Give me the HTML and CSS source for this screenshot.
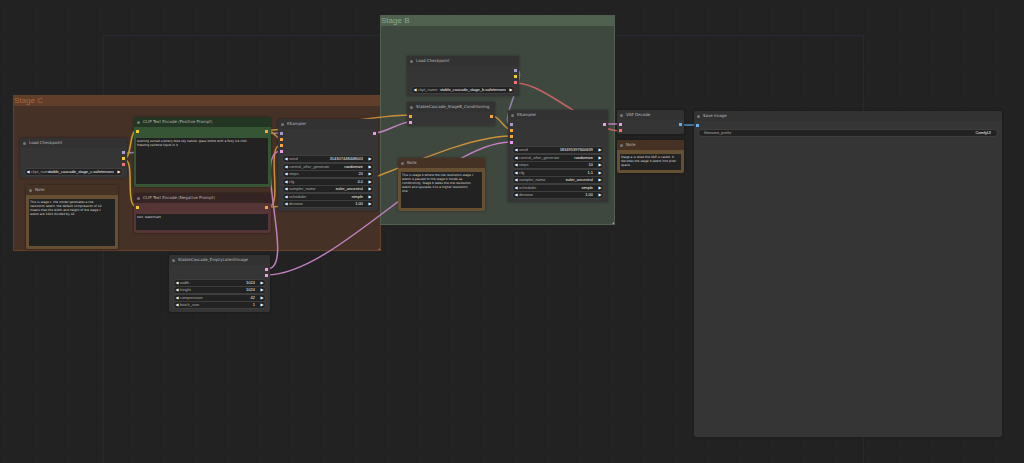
FILE: index.html
```html
<!DOCTYPE html>
<html lang="en">
<head>
<meta charset="utf-8">
<meta name="viewport" content="width=device-width, initial-scale=1">
<title>Stable Cascade workflow</title>
<link rel="stylesheet" href="styles.css">
</head>
<body>
<main class="canvas">
  <div class="extent"></div>

  <section class="group group-c"><h2>Stage C</h2></section>
  <section class="group group-b"><h2>Stage B</h2></section>

  <svg class="links" aria-hidden="true">
    <path class="model" d="M124 153C164 153 241 133 281 133"/>
    <path class="clip" d="M124 159C132 159 129 130 137 130"/>
    <path class="clip" d="M124 159C136 159 124 207 137 207"/>
    <path class="cond" d="M268 130C272 130 277 139 281 139"/>
    <path class="cond" d="M268 130C304 130 374 115 410 115"/>
    <path class="cond" d="M268 207C284 207 265 145 281 145"/>
    <path class="cond" d="M268 207C332 207 447 136 511 136"/>
    <path class="latent" d="M267 269C297 269 251 151 281 151"/>
    <path class="latent" d="M267 275C336 275 442 142 511 142"/>
    <path class="latent" d="M375 133C385 133 400 122 410 122"/>
    <path class="cond" d="M493 116C499 116 505 130 511 130"/>
    <path class="model" d="M516 70C530 70 497 124 511 124"/>
    <path class="vae" d="M516 83C545 83 591 131 620 131"/>
    <path class="latent" d="M605 124H620"/>
    <path class="image" d="M681 125H697"/>
  </svg>

  <article class="node load-c">
    <h3>Load Checkpoint</h3>
    <div class="body">
      <div class="slots"><i class="out model"></i><i class="out clip"></i><i class="out vae"></i></div>
      <div class="widgets">
        <div class="widget"><button aria-label="Previous">◀</button><label for="ckpt-c">ckpt_name</label><input id="ckpt-c" class="long" value="stable_cascade_stage_c.safetensors"><button aria-label="Next">▶</button></div>
      </div>
    </div>
  </article>

  <article class="node note note-c">
    <h3>Note</h3>
    <div class="body"><textarea aria-label="Note" spellcheck="false">This is stage c, the model generates a low
resolution latent, the default compression of 42
means that the width and height of the stage c
latent are 1024 divided by 42.</textarea></div>
  </article>

  <article class="node positive">
    <h3>CLIP Text Encode (Positive Prompt)</h3>
    <div class="body">
      <div class="slots"><i class="in clip"></i><i class="out cond"></i></div>
      <textarea aria-label="Positive prompt" spellcheck="false">evening sunset scenery blue sky nature, glass bottle with a fizzy ice cold
freezing rainbow liquid in it</textarea>
    </div>
  </article>

  <article class="node negative">
    <h3>CLIP Text Encode (Negative Prompt)</h3>
    <div class="body">
      <div class="slots"><i class="in clip"></i><i class="out cond"></i></div>
      <textarea aria-label="Negative prompt" spellcheck="false">text, watermark</textarea>
    </div>
  </article>

  <article class="node latent-image">
    <h3>StableCascade_EmptyLatentImage</h3>
    <div class="body">
      <div class="slots"><i class="out latent"></i><i class="out latent"></i></div>
      <div class="widgets">
        <div class="widget"><button aria-label="Decrease">◀</button><label for="width">width</label><input id="width" value="1024"><button aria-label="Increase">▶</button></div>
        <div class="widget"><button aria-label="Decrease">◀</button><label for="height">height</label><input id="height" value="1024"><button aria-label="Increase">▶</button></div>
        <div class="widget"><button aria-label="Decrease">◀</button><label for="compression">compression</label><input id="compression" value="42"><button aria-label="Increase">▶</button></div>
        <div class="widget"><button aria-label="Decrease">◀</button><label for="batch">batch_size</label><input id="batch" value="1"><button aria-label="Increase">▶</button></div>
      </div>
    </div>
  </article>

  <article class="node sampler sampler-c">
    <h3>KSampler</h3>
    <div class="body">
      <div class="slots"><i class="in model"></i><i class="out latent"></i><i class="in cond"></i><i class="in cond"></i><i class="in latent"></i></div>
      <div class="widgets">
        <div class="widget"><button aria-label="Decrease">◀</button><label for="seed-c">seed</label><input id="seed-c" value="314307448448003"><button aria-label="Increase">▶</button></div>
        <div class="widget"><button aria-label="Previous">◀</button><label for="control-c">control_after_generate</label><select id="control-c"><option>randomize</option></select><button aria-label="Next">▶</button></div>
        <div class="widget"><button aria-label="Decrease">◀</button><label for="steps-c">steps</label><input id="steps-c" value="20"><button aria-label="Increase">▶</button></div>
        <div class="widget"><button aria-label="Decrease">◀</button><label for="cfg-c">cfg</label><input id="cfg-c" value="4.0"><button aria-label="Increase">▶</button></div>
        <div class="widget"><button aria-label="Previous">◀</button><label for="name-c">sampler_name</label><select id="name-c"><option>euler_ancestral</option></select><button aria-label="Next">▶</button></div>
        <div class="widget"><button aria-label="Previous">◀</button><label for="scheduler-c">scheduler</label><select id="scheduler-c"><option>simple</option></select><button aria-label="Next">▶</button></div>
        <div class="widget"><button aria-label="Decrease">◀</button><label for="denoise-c">denoise</label><input id="denoise-c" value="1.00"><button aria-label="Increase">▶</button></div>
      </div>
    </div>
  </article>

  <article class="node load-b">
    <h3>Load Checkpoint</h3>
    <div class="body">
      <div class="slots"><i class="out model"></i><i class="out clip"></i><i class="out vae"></i></div>
      <div class="widgets">
        <div class="widget"><button aria-label="Previous">◀</button><label for="ckpt-b">ckpt_name</label><input id="ckpt-b" class="long" value="stable_cascade_stage_b.safetensors"><button aria-label="Next">▶</button></div>
      </div>
    </div>
  </article>

  <article class="node conditioning">
    <h3>StableCascade_StageB_Conditioning</h3>
    <div class="body">
      <div class="slots"><i class="in cond"></i><i class="out cond"></i><i class="in latent"></i></div>
    </div>
  </article>

  <article class="node note note-b">
    <h3>Note</h3>
    <div class="body"><textarea aria-label="Note" spellcheck="false">This is stage b where the low resolution stage c
latent is passed to the stage b model as
conditioning. Stage b takes the low resolution
latent and upscales it to a higher resolution
one.</textarea></div>
  </article>

  <article class="node sampler sampler-b">
    <h3>KSampler</h3>
    <div class="body">
      <div class="slots"><i class="in model"></i><i class="out latent"></i><i class="in cond"></i><i class="in cond"></i><i class="in latent"></i></div>
      <div class="widgets">
        <div class="widget"><button aria-label="Decrease">◀</button><label for="seed-b">seed</label><input id="seed-b" value="183495397600639"><button aria-label="Increase">▶</button></div>
        <div class="widget"><button aria-label="Previous">◀</button><label for="control-b">control_after_generate</label><select id="control-b"><option>randomize</option></select><button aria-label="Next">▶</button></div>
        <div class="widget"><button aria-label="Decrease">◀</button><label for="steps-b">steps</label><input id="steps-b" value="10"><button aria-label="Increase">▶</button></div>
        <div class="widget"><button aria-label="Decrease">◀</button><label for="cfg-b">cfg</label><input id="cfg-b" value="1.1"><button aria-label="Increase">▶</button></div>
        <div class="widget"><button aria-label="Previous">◀</button><label for="name-b">sampler_name</label><select id="name-b"><option>euler_ancestral</option></select><button aria-label="Next">▶</button></div>
        <div class="widget"><button aria-label="Previous">◀</button><label for="scheduler-b">scheduler</label><select id="scheduler-b"><option>simple</option></select><button aria-label="Next">▶</button></div>
        <div class="widget"><button aria-label="Decrease">◀</button><label for="denoise-b">denoise</label><input id="denoise-b" value="1.00"><button aria-label="Increase">▶</button></div>
      </div>
    </div>
  </article>

  <article class="node decode">
    <h3>VAE Decode</h3>
    <div class="body">
      <div class="slots"><i class="in latent"></i><i class="out image"></i><i class="in vae"></i></div>
    </div>
  </article>

  <article class="node note note-a">
    <h3>Note</h3>
    <div class="body"><textarea aria-label="Note" spellcheck="false">Stage a is what the VAE is called. It
decodes the stage b latent into pixel
space.</textarea></div>
  </article>

  <article class="node save">
    <h3>Save Image</h3>
    <div class="body">
      <div class="slots"><i class="in image"></i></div>
      <div class="widgets">
        <div class="widget text"><label for="prefix">filename_prefix</label><input id="prefix" value="ComfyUI"></div>
      </div>
    </div>
  </article>
</main>
</body>
</html>
```

FILE: styles.css
```css
:root {
  --node: #353535;
  --node-title: #323232;
  --field: #222;
  --model: #a99bd0;
  --clip: #f0cb2c;
  --vae: #f07474;
  --cond: #f5a53a;
  --latent: #ee98ea;
  --image: #64b0ee;
}

* {
  box-sizing: border-box;
}

body {
  margin: 0;
  background: #212121;
  font-family: "Liberation Sans", Arial, sans-serif;
}

.canvas {
  position: relative;
  min-height: 100vh;
  overflow: hidden;
  background:
    repeating-linear-gradient(90deg, #202020 0 1px, transparent 1px 32px),
    repeating-linear-gradient(#202020 0 1px, transparent 1px 32px),
    #222;
}

.extent {
  position: absolute;
  left: 103px;
  top: 35px;
  width: 761px;
  height: 100%;
  border: 1px solid #262834;
}

/* Groups */
.group {
  position: absolute;
  border: 1px solid;
}

.group::after {
  content: "";
  position: absolute;
  right: 0;
  bottom: 0;
  border: 1px solid;
  border-top-color: transparent;
  border-left-color: transparent;
}

.group h2 {
  margin: 0;
  font-size: 8px;
  font-weight: 400;
  line-height: 10px;
}

.group-c {
  left: 13px;
  top: 95px;
  width: 368px;
  height: 156px;
  background: #463126;
  border-color: #643f29;
  color: #a9653d;
}

.group-c h2 {
  background: #613e29;
}

.group-b {
  left: 380px;
  top: 15px;
  width: 235px;
  height: 210px;
  background: #3e483e;
  border-color: #506150;
  color: #87aa88;
}

.group-b h2 {
  background: #506150;
}

/* Links */
.links {
  position: absolute;
  inset: 0;
  width: 100%;
  height: 100%;
  fill: none;
  stroke-width: 1.5;
}

path.model { stroke: #8f85ad; }
path.clip { stroke: #c9a52a; }
path.vae { stroke: #c56460; }
path.cond { stroke: #c8903a; }
path.latent { stroke: #c27fbf; }
path.image { stroke: #4f8fc2; }

/* Nodes */
.node {
  position: absolute;
  display: flex;
  flex-direction: column;
  border-radius: 2px;
  background: var(--node);
  box-shadow: 0 0 2px 1px rgb(0 0 0 / 20%);
}

.node h3 {
  display: flex;
  align-items: center;
  gap: 3px;
  margin: 0;
  padding-left: 3px;
  border-radius: 2px 2px 0 0;
  background: var(--node-title);
  color: #bbb;
  font-family: "DejaVu Sans", sans-serif;
  font-size: 4px;
  font-weight: 400;
  line-height: 10px;
  white-space: nowrap;
}

.node h3::before {
  content: "";
  width: 3px;
  height: 3px;
  border-radius: 50%;
  background: #777;
}

.body {
  flex: 1;
  display: flex;
  flex-direction: column;
  padding: 1px 2px 4px;
}

.slots {
  display: grid;
  grid-template-columns: 1fr 1fr;
  grid-auto-rows: 6px;
  align-items: center;
}

.slots i {
  width: 3px;
  height: 3px;
}

.slots .in { grid-column: 1; }
.slots .out { grid-column: 2; justify-self: end; }

i.model { background: var(--model); }
i.clip { background: var(--clip); }
i.vae { background: var(--vae); }
i.cond { background: var(--cond); }
i.latent { background: var(--latent); }
i.image { background: var(--image); }

/* Widgets */
.widgets {
  flex: 1;
  display: flex;
  flex-direction: column;
  justify-content: space-between;
  padding: 2px 3px 0;
}

.widget {
  display: flex;
  align-items: center;
  height: 6px;
  padding: 0 1px;
  border-radius: 3px;
  background: var(--field);
  box-shadow: 0 0 0 1px #3e3e3e;
  color: #aaa;
  font-size: 4px;
  line-height: 6px;
}

.widget label {
  flex: 0 1 auto;
  min-width: 0;
  padding-left: 1px;
  white-space: nowrap;
}

.widget button,
.widget input,
.widget select {
  margin: 0;
  padding: 0;
  border: 0;
  background: none;
  color: #f4f4f4;
  font: inherit;
  appearance: none;
}

.widget button {
  flex: none;
  width: 4px;
  height: 6px;
  font-family: "DejaVu Sans", sans-serif;
}

.widget input,
.widget select {
  flex: 1;
  min-width: 0;
  height: 6px;
  padding-right: 5px;
  text-align: right;
  text-align-last: right;
}

.widget .long {
  flex: none;
  width: 74px;
  margin-left: auto;
  padding-right: 3px;
}

.widget.text {
  padding: 0 1px 0 4px;
}

textarea {
  display: block;
  flex: 1;
  width: 100%;
  min-height: 0;
  margin: 0;
  padding: 1px;
  border: 0;
  border-radius: 0;
  background: var(--field);
  color: #ddd;
  font: 3px/4px "DejaVu Sans", sans-serif;
  white-space: pre;
  resize: none;
  overflow: hidden;
}

/* Coloured nodes */
.note { background: #655033; }
.note h3 { background: #453224; }
.note .body { padding: 4px 3px 3px; }

.positive { background: #355535; }
.positive h3 { background: #233523; }
.positive .body,
.negative .body { padding: 1px 3px 3px 2px; }
.positive .slots,
.negative .slots { margin-bottom: 4px; }

.negative { background: #553535; }
.negative h3 { background: #352424; }

/* Places on the canvas */
.load-c { left: 20px; top: 138px; width: 107px; height: 40px; }
.note-c { left: 26px; top: 185px; width: 92px; height: 64px; }
.positive { left: 134px; top: 117px; width: 137px; height: 70px; }
.negative { left: 134px; top: 193px; width: 137px; height: 40px; }
.latent-image { left: 169px; top: 255px; width: 101px; height: 57px; }
.sampler { width: 100px; height: 92px; }
.sampler-c { left: 278px; top: 119px; }
.load-b { left: 407px; top: 56px; width: 112px; height: 40px; }
.conditioning { left: 407px; top: 102px; width: 88px; height: 24px; }
.note-b { left: 398px; top: 158px; width: 87px; height: 53px; }
.sampler-b { left: 508px; top: 110px; }
.decode { left: 617px; top: 110px; width: 67px; height: 24px; }
.note-a { left: 617px; top: 140px; width: 67px; height: 33px; }
.save { left: 694px; top: 111px; width: 308px; height: 326px; }
```
